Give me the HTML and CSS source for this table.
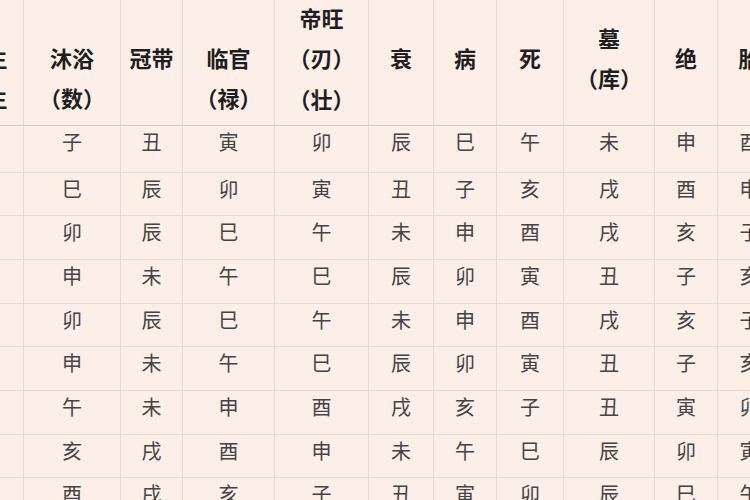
FILE: index.html
```html
<!DOCTYPE html>
<html lang="zh-CN">
<head>
<meta charset="utf-8">
<title>十二长生表</title>
<link rel="stylesheet" href="styles.css">
</head>
<body>
<div class="sheet">
  <div class="grid">
    <div class="cell head low"><span>长生</span><span>初生</span></div>
    <div class="cell head low"><span>沐浴</span><span>（数）</span></div>
    <div class="cell head"><span>冠带</span></div>
    <div class="cell head low"><span>临官</span><span>（禄）</span></div>
    <div class="cell head"><span>帝旺</span><span>（刃）</span><span>（壮）</span></div>
    <div class="cell head"><span>衰</span></div>
    <div class="cell head"><span>病</span></div>
    <div class="cell head"><span>死</span></div>
    <div class="cell head"><span>墓</span><span>（库）</span></div>
    <div class="cell head"><span>绝</span></div>
    <div class="cell head"><span>胎</span></div>

    <div class="cell d">亥</div><div class="cell d">子</div><div class="cell d">丑</div><div class="cell d">寅</div><div class="cell d">卯</div><div class="cell d">辰</div><div class="cell d">巳</div><div class="cell d">午</div><div class="cell d">未</div><div class="cell d">申</div><div class="cell d">酉</div>
    <div class="cell d">午</div><div class="cell d">巳</div><div class="cell d">辰</div><div class="cell d">卯</div><div class="cell d">寅</div><div class="cell d">丑</div><div class="cell d">子</div><div class="cell d">亥</div><div class="cell d">戌</div><div class="cell d">酉</div><div class="cell d">申</div>
    <div class="cell d">寅</div><div class="cell d">卯</div><div class="cell d">辰</div><div class="cell d">巳</div><div class="cell d">午</div><div class="cell d">未</div><div class="cell d">申</div><div class="cell d">酉</div><div class="cell d">戌</div><div class="cell d">亥</div><div class="cell d">子</div>
    <div class="cell d">酉</div><div class="cell d">申</div><div class="cell d">未</div><div class="cell d">午</div><div class="cell d">巳</div><div class="cell d">辰</div><div class="cell d">卯</div><div class="cell d">寅</div><div class="cell d">丑</div><div class="cell d">子</div><div class="cell d">亥</div>
    <div class="cell d">寅</div><div class="cell d">卯</div><div class="cell d">辰</div><div class="cell d">巳</div><div class="cell d">午</div><div class="cell d">未</div><div class="cell d">申</div><div class="cell d">酉</div><div class="cell d">戌</div><div class="cell d">亥</div><div class="cell d">子</div>
    <div class="cell d">酉</div><div class="cell d">申</div><div class="cell d">未</div><div class="cell d">午</div><div class="cell d">巳</div><div class="cell d">辰</div><div class="cell d">卯</div><div class="cell d">寅</div><div class="cell d">丑</div><div class="cell d">子</div><div class="cell d">亥</div>
    <div class="cell d">巳</div><div class="cell d">午</div><div class="cell d">未</div><div class="cell d">申</div><div class="cell d">酉</div><div class="cell d">戌</div><div class="cell d">亥</div><div class="cell d">子</div><div class="cell d">丑</div><div class="cell d">寅</div><div class="cell d">卯</div>
    <div class="cell d">子</div><div class="cell d">亥</div><div class="cell d">戌</div><div class="cell d">酉</div><div class="cell d">申</div><div class="cell d">未</div><div class="cell d">午</div><div class="cell d">巳</div><div class="cell d">辰</div><div class="cell d">卯</div><div class="cell d">寅</div>
    <div class="cell d">申</div><div class="cell d">酉</div><div class="cell d">戌</div><div class="cell d">亥</div><div class="cell d">子</div><div class="cell d">丑</div><div class="cell d">寅</div><div class="cell d">卯</div><div class="cell d">辰</div><div class="cell d">巳</div><div class="cell d">午</div>
  </div>
</div>
</body>
</html>
```

FILE: styles.css
```css
html, body {
  margin: 0;
  padding: 0;
}

body {
  width: 750px;
  height: 500px;
  overflow: hidden;
  background: #fcefe7;
  font-family: "Noto Sans CJK SC", "Noto Sans", sans-serif;
}

.sheet {
  width: 750px;
  height: 500px;
  overflow: hidden;
}

.grid {
  display: grid;
  grid-template-columns: 76px 97px 62px 92px 94px 65px 63px 67px 91px 63px 64px;
  grid-template-rows: 129px 46.5px repeat(8, 43.7px);
  width: max-content;
  margin: -3px 0 0 -52px;
}

.cell {
  box-sizing: border-box;
  border-right: 1px solid #eadbd0;
  border-bottom: 1px solid #eadbd0;
  display: flex;
  align-items: center;
}

.head {
  flex-direction: column;
  justify-content: center;
  padding-bottom: 7.5px;
  font-size: 22px;
  font-weight: 700;
  line-height: 40.5px;
  color: #1e1e1e;
  font-feature-settings: "halt";
  border-bottom-color: #dcc8bb;
}

.head span {
  display: block;
  white-space: nowrap;
}

.head.low {
  justify-content: flex-end;
}

.d {
  justify-content: center;
  align-items: flex-start;
  font-size: 20px;
  font-weight: 400;
  line-height: 31px;
  color: #444444;
}
```
